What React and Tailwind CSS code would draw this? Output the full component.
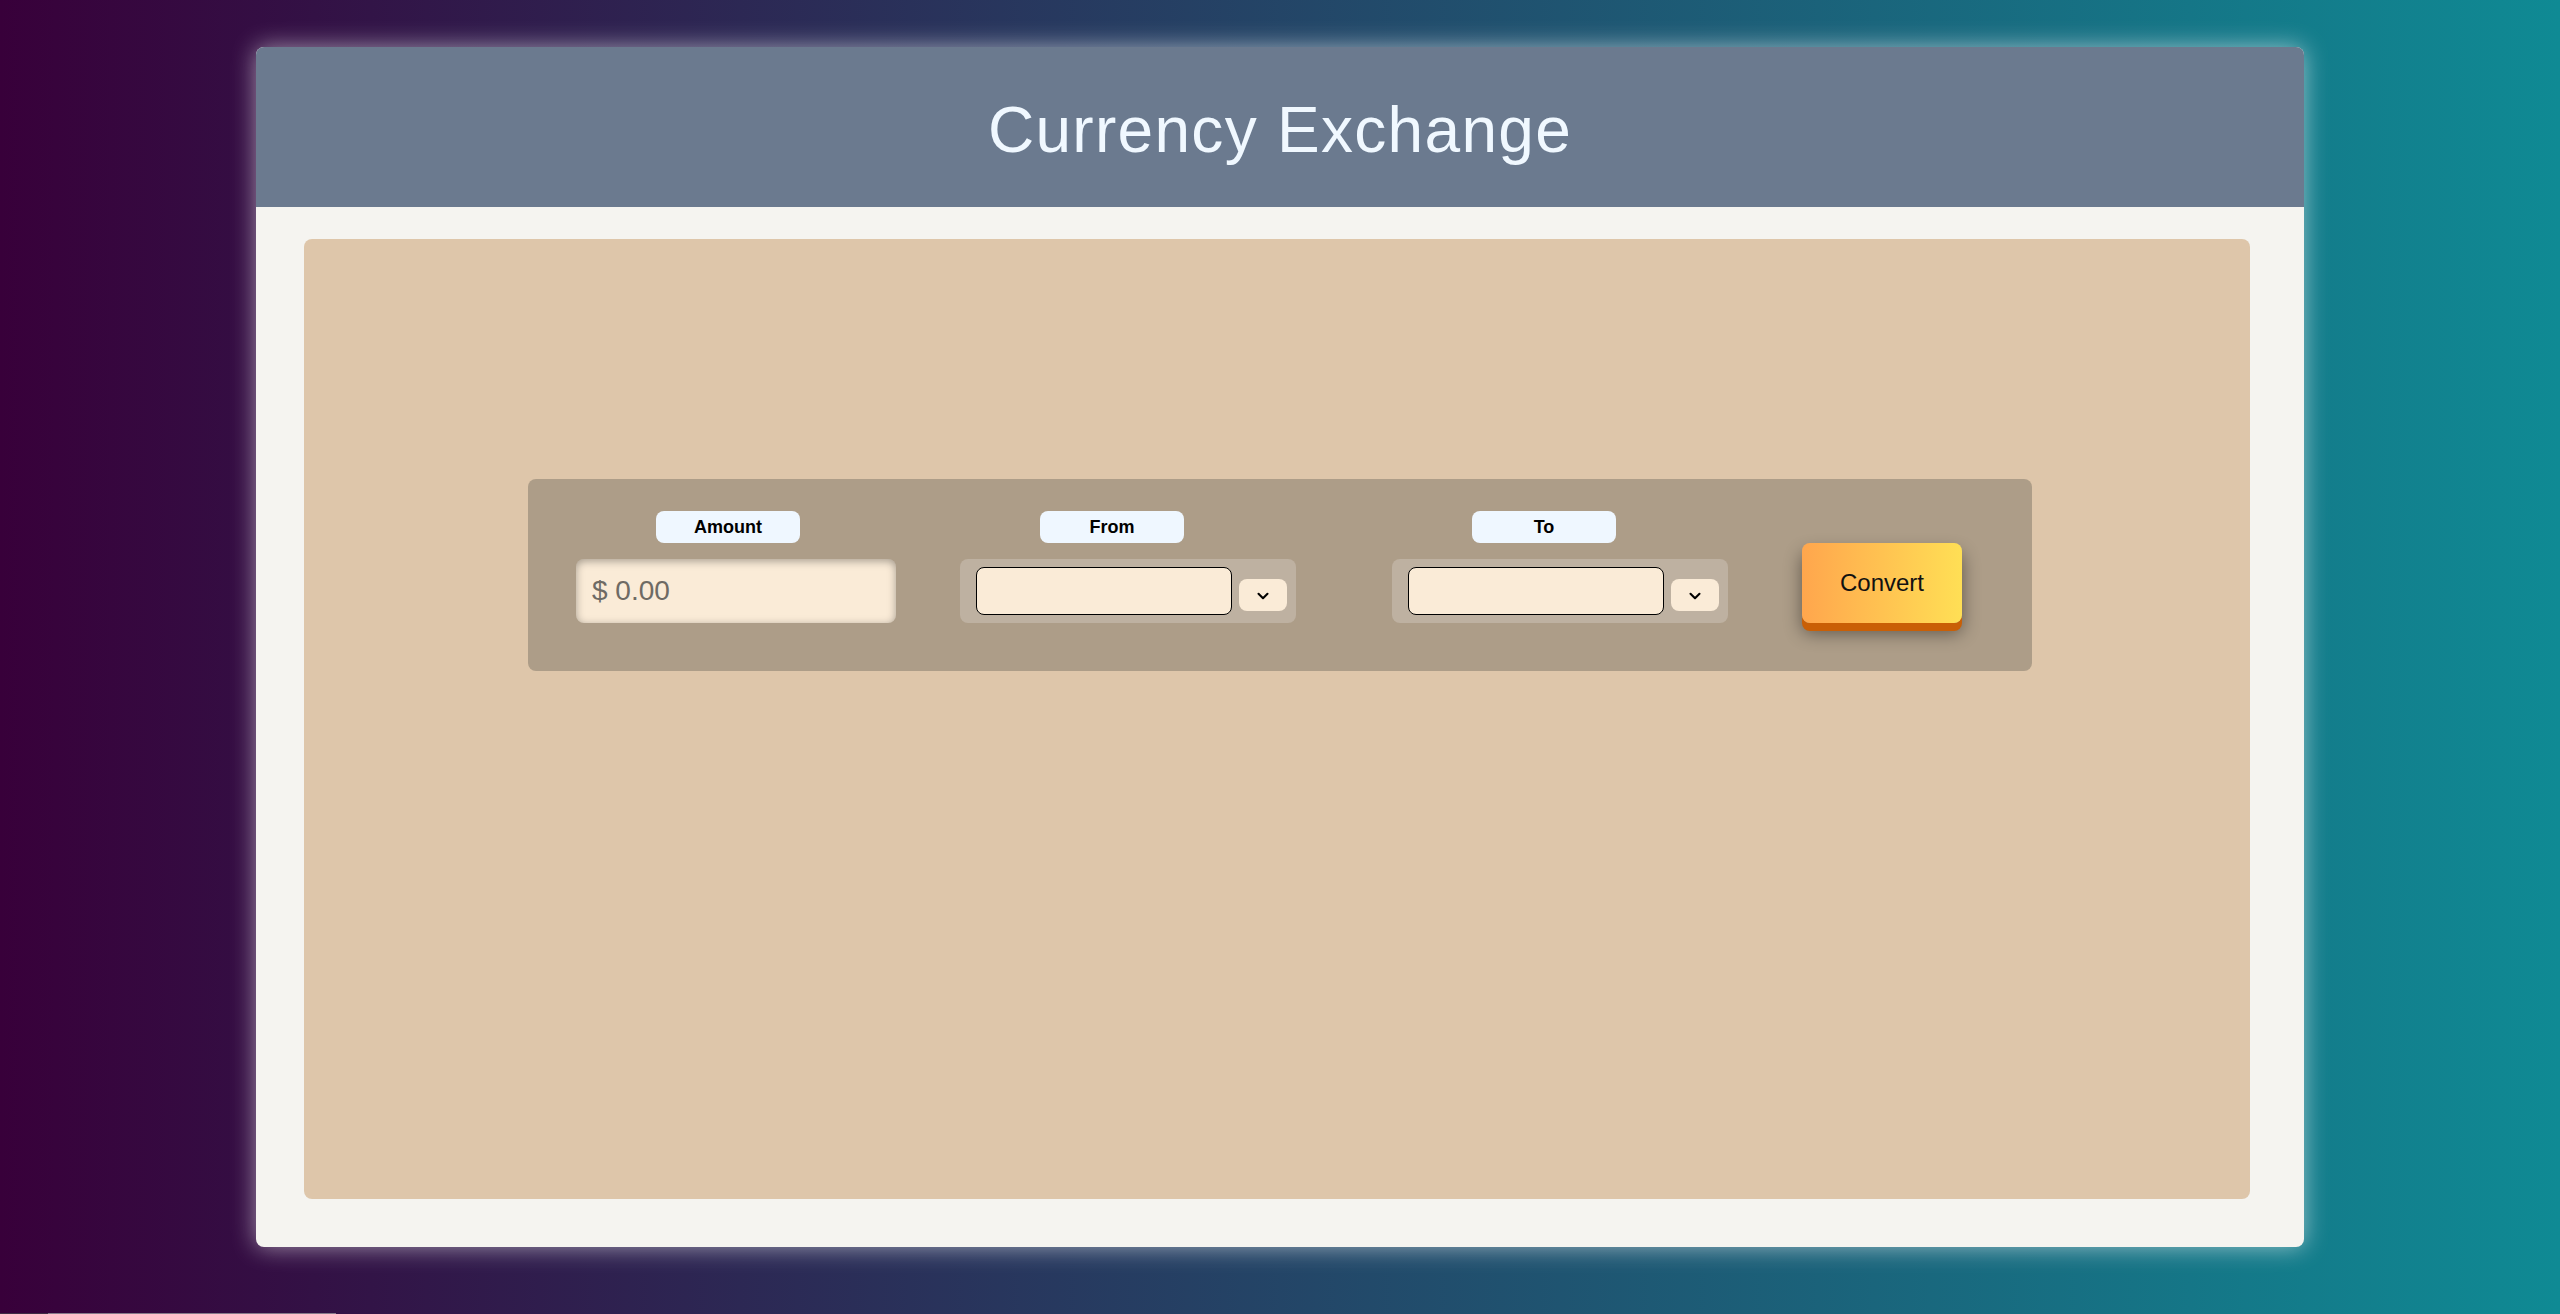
import React from "react";
import { ChevronDown } from "lucide-react";

const font = { fontFamily: '"Liberation Sans", Arial, sans-serif' };

function Label({ children }) {
  return (
    <div className="ml-20 flex h-8 w-[144px] items-center justify-center rounded-lg bg-[#eff7ff] text-[18px] font-bold text-black">
      {children}
    </div>
  );
}

function CurrencySelect() {
  return (
    <div className="flex h-16 w-[336px] items-start rounded-lg bg-[#beb1a1] pl-4 pt-2">
      <div className="h-12 w-[256px] rounded-lg border border-black bg-[#faebd7]" />
      <button className="ml-[7px] mt-3 flex h-8 w-12 items-center justify-center rounded-lg bg-[#faebd7] pt-px text-black">
        <ChevronDown size={18} strokeWidth={2.8} />
      </button>
    </div>
  );
}

export default function App() {
  return (
    <div
      className="relative h-screen w-full overflow-hidden bg-[linear-gradient(to_right,#38003a,#0f8a94)] pt-[47px]"
      style={font}
    >
      <div className="mx-auto h-[1200px] w-[80%] rounded-lg bg-[#f5f4f0] shadow-[0_0_24px_rgba(255,255,255,0.55)]">
        <header className="flex h-[160px] items-center justify-center rounded-t-lg bg-[#6b7a8f] pt-[6px]">
          <h1 className="text-[64px] font-normal tracking-[1.3px] text-[#f0f8ff]">
            Currency Exchange
          </h1>
        </header>
        <div className="pb-12 pt-8">
          <div className="ml-12 h-[960px] w-[95%] rounded-lg bg-[#dec6aa] pt-[240px]">
            <div className="ml-[224px] flex h-[192px] w-[1504px] items-end rounded-lg bg-[#ad9d88] pb-12 pl-12">
              <div className="flex flex-col gap-4">
                <Label>Amount</Label>
                <div className="flex h-16 w-[320px] items-center rounded-lg bg-[#faebd7] pl-4 text-[28px] text-[#6e6a64] shadow-[inset_0_2px_8px_rgba(0,0,0,0.35)]">
                  $ 0.00
                </div>
              </div>
              <div className="ml-16 flex flex-col gap-4">
                <Label>From</Label>
                <CurrencySelect />
              </div>
              <div className="ml-24 flex flex-col gap-4">
                <Label>To</Label>
                <CurrencySelect />
              </div>
              <button className="ml-[74px] flex h-20 w-[160px] items-center justify-center rounded-lg bg-[linear-gradient(to_right,#ffa64d,#ffdf55)] text-[24px] text-[#111] shadow-[0_8px_0_#c95f06,0_10px_18px_rgba(0,0,0,0.45)]">
                Convert
              </button>
            </div>
          </div>
        </div>
      </div>
      <div className="fixed bottom-0 left-0 h-px w-[48px] bg-[#3e2c44]" />
      <div className="fixed bottom-0 left-[48px] h-px w-[288px] bg-[#857a8a]" />
    </div>
  );
}
